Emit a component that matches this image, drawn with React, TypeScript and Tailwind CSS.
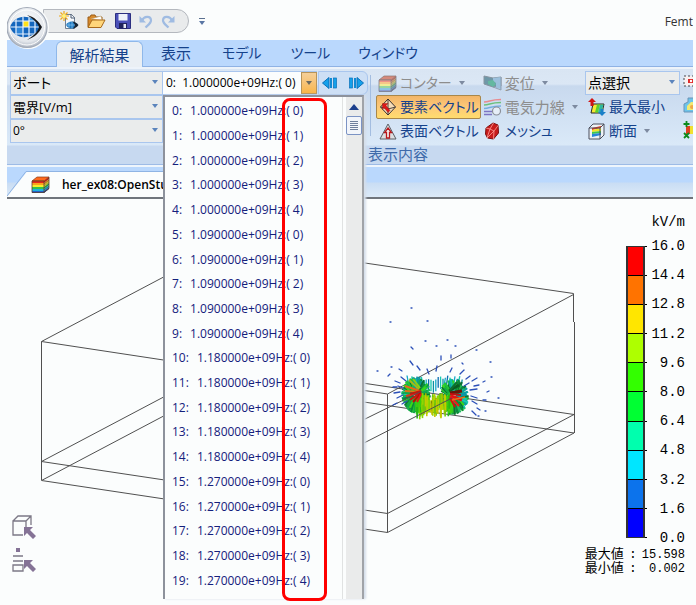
import React from "react";

const JP = "font-['Open_Sans','Noto_Sans_CJK_JP',sans-serif]";

const steps = ["1.000000e+09", "1.090000e+09", "1.180000e+09", "1.270000e+09"];
const results = Array.from({ length: 20 }, (_, i) => ({
  index: i,
  value: `${steps[Math.floor(i / 5)]}Hz:( ${i % 5})`,
}));

const scale = [
  "#ff0000",
  "#ff7300",
  "#ffe600",
  "#aeff00",
  "#33ff00",
  "#00ff33",
  "#00ffae",
  "#00e6ff",
  "#0c73ec",
  "#0000ff",
];
const scaleLabels = ["16.0", "14.4", "12.8", "11.2", "9.6", "8.0", "6.4", "4.8", "3.2", "1.6", "0.0"];

function Caret({ className = "text-[#5b84bc]" }: { className?: string }) {
  return (
    <svg width="6" height="4" viewBox="0 0 6 4" className={className} aria-hidden="true">
      <path d="M0 0h6L3 4z" fill="currentColor" />
    </svg>
  );
}

function Combo({ label, value, size = "text-[14px]" }: { label: string; value: string; size?: string }) {
  return (
    <label className="relative flex h-6 border border-[#a9c6ee] bg-[#eaecec]">
      <span className="sr-only">{label}</span>
      <select
        className={`w-full appearance-none bg-transparent px-[2px] leading-[22px] text-black outline-none [font-feature-settings:'palt'] ${size}`}
      >
        <option>{value}</option>
      </select>
      <span className="pointer-events-none absolute top-2 right-1">
        <Caret />
      </span>
    </label>
  );
}

/* ---------- quick access icons ---------- */

function Orb() {
  return (
    <svg width="42" height="43" viewBox="0 0 42 43" aria-hidden="true">
      <defs>
        <radialGradient id="orb" cx="50%" cy="40%" r="60%">
          <stop offset="0" stopColor="#ffffff" />
          <stop offset="0.75" stopColor="#e3e7ec" />
          <stop offset="1" stopColor="#a9b2bf" />
        </radialGradient>
        <clipPath id="eye">
          <path d="M3 21C7 9 24 6 34 21C24 36 7 33 3 21z" />
        </clipPath>
      </defs>
      <circle cx="20" cy="21.500" r="20" fill="url(#orb)" stroke="#a3abb8" strokeWidth="1.200" />
      <circle cx="20" cy="21.500" r="17.500" fill="none" stroke="#fff" strokeWidth="1" />
      <g clipPath="url(#eye)">
        <rect width="42" height="43" fill="#1466bd" />
        <rect x="16" y="15" width="6" height="6" fill="#ffe21a" />
        <rect x="22" y="9" width="5" height="6" fill="#3f9ae6" />
        <rect x="9" y="21" width="7" height="7" fill="#2f86d8" />
        <path d="M9 5v32M16 5v32M22 5v32M28 5v32M0 15h40M0 21h40M0 28h40" stroke="#e8f2ff" strokeWidth="1.200" />
      </g>
      <path d="M20 9C28 11 32 16 35 21C32 27 28 31 20 34C26 30 31 26 32 21C31 17 26 13 20 9z" fill="#16181c" />
    </svg>
  );
}

function NewIcon() {
  return (
    <svg width="20" height="20" viewBox="0 0 20 20" aria-hidden="true">
      <path d="M6.500 3.500h6l3 3v11h-9z" fill="#f6f8fb" stroke="#6f7f92" />
      <path d="M12 3v4h4" fill="none" stroke="#4a5a70" />
      <path d="M5 0v10M0 5h10M1.500 1.500l7 7M8.500 1.500l-7 7" stroke="#f0a818" strokeWidth="1.200" />
      <circle cx="5" cy="5" r="2" fill="#fff27a" />
      <path d="M7 14c2-4 8-5 12 0c-4 5-10 4-12 0z" fill="#1c78c0" />
      <path d="M13 10.500c3 0 5 2 6.500 3.500c-1.500 2-3.500 3.500-6 3.500c3-1.500 3-5-.5-7z" fill="#1a2430" />
      <path d="M10 11v6M13 10.500v7M7 14h9" stroke="#9fd2f5" strokeWidth=".6" />
    </svg>
  );
}

function OpenIcon() {
  return (
    <svg width="19" height="16" viewBox="0 0 19 16" aria-hidden="true">
      <path d="M1 14V4h2l1-2h4l1 2h6v3" fill="#d88a2c" stroke="#9a5c18" />
      <path d="M4 6L14 3l1 4" fill="#fff" stroke="#b8a070" strokeWidth=".6" />
      <path d="M1 14.500L5 7h13l-4 7.500z" fill="#ffd67a" stroke="#a86a1c" />
    </svg>
  );
}

function SaveIcon() {
  return (
    <svg width="16" height="16" viewBox="0 0 16 16" aria-hidden="true">
      <path d="M.5.5h15v15H2l-1.500-1.500z" fill="#4a50b8" stroke="#2c2f80" />
      <rect x="3.500" y="1" width="9" height="6.500" fill="#eef1fa" />
      <rect x="4" y="10" width="8" height="5.500" fill="#20235e" />
      <rect x="8.500" y="11" width="2.500" height="4" fill="#e6e9f5" />
    </svg>
  );
}

function UndoIcon({ flip = false }: { flip?: boolean }) {
  return (
    <svg width="14" height="15" viewBox="0 0 14 15" className={flip ? "-scale-x-100" : ""} aria-hidden="true">
      <path d="M3 6.500C5 2 11.500 1.500 12 6C12.300 9 9 11 6.500 13.500" fill="none" stroke="#9fbbe2" strokeWidth="2.200" />
      <path d="M.5 2v6.500H7z" fill="#9fbbe2" />
    </svg>
  );
}

/* ---------- ribbon icons ---------- */

function RainbowCube({ faded = false }: { faded?: boolean }) {
  const bands = faded
    ? ["#ee9488", "#f5c689", "#f0ec96", "#98d6a0", "#8cc4e4", "#8a9cd0"]
    : ["#e8281a", "#f8a31c", "#f6ee2a", "#35c24a", "#1fb4dc", "#2560c8"];
  return (
    <svg width="19" height="17" viewBox="0 0 19 17" aria-hidden="true">
      <path d="M1 5L6 1h12l-5 4z" fill={faded ? "#d58a7c" : "#ff6a1c"} stroke={faded ? "#8c7470" : "#8a3a14"} strokeWidth=".7" />
      {bands.map((c, i) => (
        <g key={c} fill={c}>
          <rect x="1" y={5 + i * 2} width="12" height="2" />
          <path d={`M13 ${5 + i * 2}l5-4v2l-5 4z`} style={{ filter: "brightness(.75)" }} />
        </g>
      ))}
      <path d="M1 5h12v11.500H1zM13 16.500l5-4V1" fill="none" stroke={faded ? "#80808a" : "#5a4030"} strokeWidth=".8" />
    </svg>
  );
}

function ElementVectorIcon() {
  return (
    <svg width="18" height="18" viewBox="0 0 18 18" aria-hidden="true">
      <path d="M9 1l7.500 8L9 17 1.500 9z" fill="#f6dcb8" stroke="#3a3230" />
      <path d="M9 1v16M1.500 9L9 11l7.500-2" fill="none" stroke="#3a3230" strokeWidth=".9" />
      <path d="M3.500 5.500h5.500l-2 2 4 5-2 2-4-5-1.500 2z" fill="#e01818" stroke="#8c0c0c" strokeWidth=".4" />
    </svg>
  );
}

function SurfaceVectorIcon() {
  return (
    <svg width="18" height="17" viewBox="0 0 18 17" aria-hidden="true">
      <path d="M9 1l8 15H1z" fill="#dcdfe2" stroke="#5b5f66" />
      <path d="M9 5l3.500 4.500h-2v5.500h-3V9.500h-2z" fill="#f5efee" stroke="#b8181c" strokeWidth="1.300" />
    </svg>
  );
}

function DisplaceIcon() {
  return (
    <svg width="19" height="16" viewBox="0 0 19 16" aria-hidden="true">
      <path d="M1 1l9 2 8-1v9l-8 1-9-3z" fill="#6f98a8" stroke="#8794a0" />
      <path d="M10 3l8-1v12l-5-1V8l-3-2z" fill="#9cc0dc" />
      <path d="M5 6l5-1 3 4-3 3-5-3z" fill="#64b8a0" />
      <path d="M18 2v13l-8-3" fill="none" stroke="#8592a4" strokeWidth=".8" />
    </svg>
  );
}

function FieldLineIcon() {
  return (
    <svg width="19" height="18" viewBox="0 0 19 18" fill="none" aria-hidden="true">
      <path d="M1 4c6 0 6-2.500 17-2.500" stroke="#e88a90" strokeWidth="1.400" />
      <path d="M1 7c6 0 6-2.500 17-2.500" stroke="#6cc07c" strokeWidth="1.400" />
      <path d="M1 10.500c6 0 6-2.500 17-2.500" stroke="#74aee0" strokeWidth="1.400" />
      <path d="M1 13.500h8M1 16.500h8" stroke="#7c74c4" strokeWidth="1.400" />
      <circle cx="13.500" cy="13" r="4" fill="#e6eef8" stroke="#8a8f98" strokeWidth="1.200" />
    </svg>
  );
}

function MeshIcon() {
  return (
    <svg width="16" height="18" viewBox="0 0 16 18" aria-hidden="true">
      <path d="M2 6l7-5 5 2 .5 8-5 6-6-1-2-4z" fill="#c81c1c" stroke="#7c1010" />
      <path d="M9.500 1L6 7l4 2 4.500-6M2 6l4 1-3 9 7-7-.5 8" stroke="#ffa098" strokeWidth=".8" fill="none" />
    </svg>
  );
}

function MinMaxIcon() {
  return (
    <svg width="18" height="18" viewBox="0 0 18 18" aria-hidden="true">
      <path d="M5 6h11l-2 9H3z" fill="#f5e832" stroke="#272727" />
      <path d="M9 6.500h3l-2 8H7z" fill="#58d030" />
      <path d="M12 6.500h3.500l-2 8H10z" fill="#2fb8a0" />
      <path d="M4 0l4 4H5.500v4h-3V4H0z" fill="#d01414" />
      <path d="M14 18l-4-4h2.500v-3h3v3H18z" fill="#1a80c8" />
    </svg>
  );
}

function SectionIcon() {
  return (
    <svg width="17" height="17" viewBox="0 0 17 17" aria-hidden="true">
      <path d="M1 5l4-4h11v11l-4 4H1z" fill="#eef2f6" stroke="#4b4f5c" />
      <path d="M4 5l9-2v2l-9 2z" fill="#e83a20" />
      <path d="M4 7l9-2v3l-9 1z" fill="#f2e428" />
      <path d="M4 9l9-1v2l-9 1z" fill="#3cc850" />
      <path d="M4 11l9-1v2l-9 2z" fill="#2884d8" />
      <path d="M1 5h11v11M12 5l4-4" fill="none" stroke="#4b4f5c" />
    </svg>
  );
}

function StepIcon({ flip = false }: { flip?: boolean }) {
  return (
    <svg width="15" height="12" viewBox="0 0 15 12" className={flip ? "-scale-x-100" : ""} aria-hidden="true">
      <path d="M.5 6L7 .5v11z" fill="#14a0ea" stroke="#0b6fb8" />
      <rect x="8" y="1" width="2" height="10" fill="#0f8ad4" />
      <rect x="11.500" y="1" width="3" height="10" fill="#14a0ea" stroke="#0b6fb8" strokeWidth=".7" />
    </svg>
  );
}

function SelectRegionIcon() {
  return (
    <svg width="16" height="14" viewBox="0 0 16 14" aria-hidden="true">
      <rect x="1" y="1" width="14" height="10" fill="#f8f0f0" stroke="#44464c" strokeDasharray="2 2" />
      <path d="M5 4h7v4H5z" fill="#e02828" />
      <circle cx="8" cy="6" r="1.200" fill="#fff" />
    </svg>
  );
}

function ContourMapIcon() {
  return (
    <svg width="16" height="18" viewBox="0 0 16 18" aria-hidden="true">
      <path d="M1 16V8l4-2V2h11v14z" fill="#6cc4ea" stroke="#6a94b8" />
      <path d="M4 14V10l4-4h6v8z" fill="#f2ea70" />
      <circle cx="9" cy="11" r="2" fill="#f0a848" />
    </svg>
  );
}

function PointsIcon() {
  return (
    <svg width="16" height="18" viewBox="0 0 16 18" aria-hidden="true">
      <rect x="3" y="5" width="12" height="8" fill="#f0e030" />
      <path d="M3 5h4v8H3z" fill="#e04020" />
      <path d="M3.500 0v6M.5 3h6M1 12l5 5M6 12l-5 5" stroke="#0d8a1c" strokeWidth="1.800" />
    </svg>
  );
}

function RibbonButton({
  icon,
  children,
  tone = "text-[#15428b]",
  size = "text-[14px]",
  active = false,
  menu = false,
}: {
  icon: React.ReactNode;
  children: React.ReactNode;
  tone?: string;
  size?: string;
  active?: boolean;
  menu?: boolean;
}) {
  return (
    <button
      type="button"
      aria-pressed={active}
      className={`flex h-6 items-center gap-[3px] rounded-xs border px-px whitespace-nowrap [font-feature-settings:'palt'] ${size} ${tone} ${
        active ? "border-[#a8874a] bg-linear-to-b from-[#f2b568] via-[#fdc978] to-[#ffdc6e]" : "border-transparent"
      }`}
    >
      <span className="flex w-[19px] shrink-0 justify-center">{icon}</span>
      <span className="leading-5">{children}</span>
      {menu && (
        <span className="pl-1">
          <Caret className="text-[#7d8aa0]" />
        </span>
      )}
    </button>
  );
}

function Divider() {
  return <div className="mt-1 mb-7 w-px self-stretch bg-[#a3bde0]" />;
}

/* ---------- field plot ---------- */

function noise(n: number) {
  const v = Math.sin(n * 127.1 + 11.7) * 43758.5453;
  return v - Math.floor(v);
}

type Stroke = { x1: number; y1: number; x2: number; y2: number; c: string; w: number };

function lobe(cx: number, cy: number, side: number, seed: number): Stroke[] {
  const out: Stroke[] = [];
  for (let i = 0; i < 190; i++) {
    const a = noise(seed + i) * Math.PI * 2;
    const ux = Math.cos(a);
    const uy = Math.sin(a);
    const inner = 2 + noise(seed + i + 300) * 6;
    const outer = 11 + noise(seed + i + 600) * 4;
    const greens = ["#0a8a3c", "#12a84a", "#22c832", "#0c7034", "#1cb860", "#3ad818"];
    const teals = ["#10c0a0", "#0a98a8", "#18c8b8"];
    const outerSide = ux * side > 0.75;
    const set = outerSide || uy < -0.9 ? [...greens, ...teals] : greens;
    out.push({
      x1: cx + ux * inner,
      y1: cy + uy * inner,
      x2: cx + ux * outer,
      y2: cy + uy * outer * 1.25,
      c: set[Math.floor(noise(seed + i + 900) * set.length)],
      w: 2,
    });
  }
  return out;
}

const bodyStrokes: Stroke[] = [];
for (let i = 0; i < 110; i++) {
  const x = 416 + noise(i + 40) * 36;
  const y = 393 + noise(i + 90) * 11;
  const edge = x < 422 || x > 446;
  const cols = edge
    ? ["#6cd808", "#3cd010", "#8ed800", "#28b818"]
    : ["#b4d400", "#c8c800", "#8ed800", "#a0b400", "#6cc80c", "#848c00"];
  bodyStrokes.push({ x1: x, y1: y, x2: x, y2: y + 9 + noise(i + 140) * 7, c: cols[i % cols.length], w: 1.6 });
}
const topStrokes: Stroke[] = [];
for (let i = 0; i < 24; i++) {
  const x = 407 + i * 2.4;
  const y = 375 + noise(i + 3) * 6;
  topStrokes.push({
    x1: x,
    y1: y,
    x2: x + (i < 8 ? 2 : i > 15 ? -2 : 0),
    y2: y + 9 + noise(i + 60) * 6,
    c: ["#12a8c8", "#0c6cb0", "#18c8b0", "#0a90a0"][i % 4],
    w: 1.3,
  });
}
const warm: Stroke[] = [
  { x1: 420, y1: 391, x2: 405, y2: 386, c: "#e86818", w: 2 },
  { x1: 420, y1: 392, x2: 405, y2: 391, c: "#d87818", w: 2 },
  { x1: 419, y1: 389, x2: 409, y2: 380, c: "#a8b818", w: 2 },
  { x1: 420, y1: 388, x2: 413, y2: 379, c: "#90d010", w: 2 },
  { x1: 420, y1: 393, x2: 406, y2: 396, c: "#d83818", w: 2 },
  { x1: 421, y1: 391, x2: 410, y2: 394, c: "#c01810", w: 2 },
  { x1: 421, y1: 392, x2: 410, y2: 400, c: "#d01010", w: 2 },
  { x1: 421, y1: 393, x2: 413, y2: 402, c: "#c00808", w: 2 },
  { x1: 421, y1: 394, x2: 417, y2: 402, c: "#e01818", w: 2 },
  { x1: 449, y1: 391, x2: 459, y2: 385, c: "#0a5c20", w: 3 },
  { x1: 450, y1: 390, x2: 457, y2: 382, c: "#0c7030", w: 2 },
  { x1: 450, y1: 393, x2: 462, y2: 391, c: "#6c1408", w: 3 },
  { x1: 450, y1: 394, x2: 461, y2: 395, c: "#c01010", w: 2 },
  { x1: 451, y1: 396, x2: 462, y2: 400, c: "#e01414", w: 3 },
  { x1: 450, y1: 396, x2: 459, y2: 406, c: "#f01818", w: 2 },
  { x1: 450, y1: 398, x2: 455, y2: 407, c: "#d80c0c", w: 2 },
  { x1: 452, y1: 400, x2: 465, y2: 397, c: "#e07818", w: 1.5 },
];
const specks = [
  [411, 308, 1, 0], [390, 322, 1, 0], [427, 321, 1, 0], [425, 341, 1, 0], [447, 340, 1, 0], [436, 346, 1, 0],
  [455, 346, 1, 0], [411, 347, 2, 2], [476, 350, 1, 0], [462, 363, 1, 1], [391, 367, 1, 0], [377, 371, 1, 0],
  [490, 362, 1, 0], [491, 377, 1, 0], [410, 361, 3, 4], [417, 366, 3, 4], [441, 356, 0, 4], [451, 355, 0, 3],
  [437, 366, -1, 5], [452, 368, -2, 4], [464, 370, -4, 4], [427, 369, 2, 5], [399, 369, 3, 2], [388, 376, 2, -2],
  [395, 381, 5, 2], [470, 376, -4, 3], [477, 378, -5, 3], [469, 383, -5, 3], [474, 386, 5, -1], [398, 386, 5, 2],
  [393, 387, 4, 0], [483, 382, 2, -1], [487, 392, 2, -1], [498, 398, 1, 0], [394, 393, 6, -1], [397, 398, 6, -3],
  [393, 405, 4, -2], [471, 396, 6, 2], [472, 401, 5, 3], [477, 408, 3, 2], [483, 400, 3, 0], [478, 416, 1, 0],
  [472, 411, 4, 4], [485, 411, 1, 0], [401, 377, 5, 4], [470, 390, 7, -1], [402, 404, 5, -3],
];

function FieldPlot() {
  const strokes = [...topStrokes, ...lobe(416, 395, -1, 7), ...lobe(454, 397, 1, 51), ...bodyStrokes, ...warm];
  return (
    <svg
      viewBox="7 199 686 400"
      preserveAspectRatio="xMinYMin meet"
      className="absolute inset-0 h-full w-full"
      role="img"
      aria-label="電界ベクトル"
    >
      <g fill="none" stroke="#505050" strokeWidth="1">
        <path d="M41.500 480V341.500L228 243L573.500 293.500V322M574.500 322V433M41.500 341.500L387.500 394L573.500 294.500" />
        <path d="M387.500 394V532.500M41.500 461.500L387.500 513.500L574 414.500M41.500 480.500L387.500 532.500L574 433" />
        <path d="M41.500 461.500L228 363L574 414.500M41.500 480.500L228 382L574 433M228 243V382" />
      </g>
      {strokes.map((s, i) => (
        <line key={i} x1={s.x1} y1={s.y1} x2={s.x2} y2={s.y2} stroke={s.c} strokeWidth={s.w} />
      ))}
      <g fill="none" stroke="#505050" strokeWidth="1">
        <path d="M363 420L422 391M363 443.500L452 398" />
      </g>
      <g stroke="#2c50b8" strokeWidth="1.300" strokeLinecap="round">
        {specks.map(([x, y, dx, dy], i) => (
          <line key={i} x1={x} y1={y} x2={x + dx} y2={y + dy} />
        ))}
      </g>
    </svg>
  );
}

function Legend() {
  return (
    <div className="relative flex flex-col items-end pr-2 text-black">
      <div className="font-['Liberation_Mono',monospace] text-[14px] leading-4">kV/m</div>
      <div className="flex gap-1">
        <div className="mt-4 flex h-[292px]">
          <div className="flex w-[19px] flex-col divide-y divide-black border-x-2 border-y border-[#333]">
            {scale.map((c) => (
              <div key={c} className="flex-1" style={{ backgroundColor: c }} />
            ))}
          </div>
          <div className="flex w-[2px] flex-col justify-between">
            {scaleLabels.map((l) => (
              <div key={l} className="h-px bg-black" />
            ))}
          </div>
        </div>
        <div className="mt-2 flex h-[308px] flex-col justify-between text-right font-['Liberation_Mono',monospace] text-[14px] leading-4">
          {scaleLabels.map((l) => (
            <div key={l}>{l}</div>
          ))}
        </div>
      </div>
      <table className="mt-[2px] font-['Liberation_Mono','Noto_Sans_CJK_JP',monospace] text-[13px] leading-[14px]">
        <tbody>
          {[
            ["最大値", "15.598"],
            ["最小値", "0.002"],
          ].map(([k, v]) => (
            <tr key={k}>
              <th className="p-0 text-left font-normal">{k}</th>
              <td className="w-[18px] p-0 text-center">:</td>
              <td className="p-0 text-right text-[12px]">{v}</td>
            </tr>
          ))}
        </tbody>
      </table>
    </div>
  );
}

function PickArrow() {
  return <path d="M13 12h9l-3 3 6 6-3 3-6-6-3 3z" fill="#857396" />;
}

function ResultMenu() {
  return (
    <div className="absolute top-[95px] bottom-0 left-[156px] flex w-[201px] border-t-2 border-r-2 border-l-2 border-[#8d929c] border-r-[#a0a3a8] bg-[#fbfdfd] shadow-[2px_0_2px_#d5deea]">
      <ul role="listbox" aria-label="結果一覧" className="flex flex-1 flex-col border-r border-[#e0e2e2] pt-[2px] pb-[6px]">
        {results.map((r) => (
          <li
            key={r.index}
            role="option"
            aria-selected={r.index === 0}
            className="flex flex-1 items-center gap-2 pl-[7px] text-[12px] leading-4 whitespace-nowrap text-[#14207c]"
          >
            <span>{r.index}:</span>
            <span>{r.value}</span>
          </li>
        ))}
      </ul>
      <div className="ml-[3px] flex w-4 flex-col items-center bg-[#eaebeb]">
        <button type="button" aria-label="上へ" className="flex h-[19px] w-full items-center justify-center">
          <svg width="10" height="6" viewBox="0 0 10 6">
            <path d="M5 0l5 6H0z" fill="#1c3f8c" />
          </svg>
        </button>
        <div className="flex h-[19px] w-full flex-col items-center justify-center gap-px rounded-xs border border-[#7b93c4] bg-[#f2f5fa]">
          <i className="h-px w-2 bg-[#6f7f9c]" />
          <i className="h-px w-2 bg-[#6f7f9c]" />
          <i className="h-px w-2 bg-[#6f7f9c]" />
          <i className="h-px w-2 bg-[#6f7f9c]" />
          <i className="h-px w-2 bg-[#6f7f9c]" />
        </div>
      </div>
      <div className="pointer-events-none absolute top-[1px] -bottom-[2px] left-[117px] w-[45px] rounded-lg border-3 border-[#ff0000]" />
    </div>
  );
}

export default function App() {
  return (
    <div className={`min-h-screen bg-[#fbfdfd] pr-[3px] pb-[6px] pl-[7px] ${JP}`}>
      <div className="relative flex min-h-[calc(100vh-6px)] flex-col">
        <header className="flex h-10 items-center justify-between overflow-hidden">
          <div className="mt-[2px] ml-9 flex items-center gap-[10px]">
            <div className="flex h-6 w-[146px] items-center justify-between rounded-r-full border border-[#b4b8be] bg-[#e9ebec] pr-[13px] pl-[15px]">
              <button type="button" aria-label="新規"><NewIcon /></button>
              <button type="button" aria-label="開く"><OpenIcon /></button>
              <button type="button" aria-label="保存"><SaveIcon /></button>
              <button type="button" aria-label="元に戻す"><UndoIcon /></button>
              <button type="button" aria-label="やり直し"><UndoIcon flip /></button>
            </div>
            <button type="button" aria-label="カスタマイズ" className="flex flex-col gap-[2px]">
              <i className="h-px w-[6px] bg-[#5a7090]" />
              <Caret className="text-[#5a76a4]" />
            </button>
          </div>
          <h1 className="mt-1 text-[12px] text-[#333]">Femt</h1>
        </header>
        <button type="button" aria-label="メニュー" className="absolute top-[6px] left-0 rounded-full bg-[#fbfdfd]">
          <Orb />
        </button>

        <nav className="flex h-[27px] items-end border-b border-[#8fb2e4] bg-[#bad8fd] pl-[49px] text-[#15428b] [font-feature-settings:'palt']">
          <button
            type="button"
            className="-mb-px h-[26px] w-[87px] rounded-t-md border border-b-0 border-[#8fb8ea] bg-[#eaeff4] text-[15px] leading-[22px]"
          >
            解析結果
          </button>
          <button type="button" className="ml-[18px] h-[26px] text-[15px] leading-6">表示</button>
          <button type="button" className="ml-[31px] h-[26px] text-[14px] leading-6">モデル</button>
          <button type="button" className="ml-[29px] h-[26px] text-[14px] leading-6">ツール</button>
          <button type="button" className="ml-[28px] h-[26px] text-[14px] leading-6">ウィンドウ</button>
        </nav>

        <section className="flex h-[98px] overflow-hidden border-t-2 border-b border-[#edf3fa] border-b-[#9dbbe6] bg-[linear-gradient(#d9e5f3_0px,#dbe7f5_15px,#c8d9ee_17px,#dae9f8_76px,#c7d9f0_77px,#c7d9f0_100%)] pt-[2px] pl-[3px]">
          <div className="flex items-start">
            <div className="grid w-[153px] shrink-0">
              <Combo label="表示対象" value="ボート" />
              <Combo label="物理量" value="電界[V/m]" size="text-[13px]" />
              <Combo label="位相" value="0°" size="text-[12px]" />
            </div>
            <label className="relative flex h-6 w-[154px] shrink-0 border-y border-[#a9c6ee] bg-[#fbfdfd]">
              <span className="sr-only">結果</span>
              <select className="w-full appearance-none bg-transparent pl-[3px] text-[12px] text-black outline-none">
                <option>{"0:\u00a0\u00a01.000000e+09Hz:( 0)"}</option>
              </select>
              <span className="pointer-events-none absolute top-0 right-0 flex h-full w-4 items-center justify-center border border-[#b89458] bg-linear-to-b from-[#f5cf98] to-[#f9b648]">
                <Caret className="text-[#6b6a60]" />
              </span>
            </label>
            <div className="ml-px flex h-6 w-[50px] shrink-0 items-center justify-between rounded-r-md border border-[#a9c6ee] bg-[#cddff5] px-[3px]">
              <button type="button" aria-label="前へ"><StepIcon /></button>
              <button type="button" aria-label="次へ"><StepIcon flip /></button>
            </div>
          </div>
          <div className="ml-[2px] flex"><Divider /></div>
          <div className="ml-[5px] w-[203px] shrink-0">
            <div className="flex">
              <div className="w-[105px]">
                <RibbonButton icon={<RainbowCube faded />} tone="text-[#8d8d8d]" menu>コンター</RibbonButton>
                <RibbonButton icon={<ElementVectorIcon />} active>要素ベクトル</RibbonButton>
                <RibbonButton icon={<SurfaceVectorIcon />}>表面ベクトル</RibbonButton>
              </div>
              <div>
                <RibbonButton icon={<DisplaceIcon />} tone="text-[#8d8d8d]" size="text-[15px]" menu>変位</RibbonButton>
                <RibbonButton icon={<FieldLineIcon />} tone="text-[#8d8d8d]" size="text-[15px]" menu>電気力線</RibbonButton>
                <RibbonButton icon={<MeshIcon />}>メッシュ</RibbonButton>
              </div>
            </div>
            <div className="-ml-2 pt-px text-[15px] leading-5 text-[#3e6aaa]">表示内容</div>
          </div>
          <Divider />
          <div className="ml-[6px] w-[95px] shrink-0">
            <Combo label="選択モード" value="点選択" />
            <RibbonButton icon={<MinMaxIcon />}>最大最小</RibbonButton>
            <RibbonButton icon={<SectionIcon />} menu>断面</RibbonButton>
          </div>
          <div className="ml-[3px] flex h-[72px] shrink-0 flex-col justify-around">
            <button type="button" aria-label="範囲選択"><SelectRegionIcon /></button>
            <button type="button" aria-label="分布"><ContourMapIcon /></button>
            <button type="button" aria-label="点追加"><PointsIcon /></button>
          </div>
        </section>

        <div className="flex h-[34px] items-end border-t-2 border-b-2 border-[#eef5fc] border-b-[#70757c] bg-[linear-gradient(#bad8fd_0px,#bad8fd_15px,#c9ddf4_16px,#dceaf8_100%)]">
          <svg width="22" height="26" viewBox="0 0 22 26" aria-hidden="true">
            <path d="M0 26L20 .5h2V26z" fill="#fbfdfd" />
            <path d="M0 25L19 .5h3" fill="none" stroke="#8fb4e4" />
          </svg>
          <button
            type="button"
            className="flex h-[26px] items-center gap-3 border-t border-[#8fb4e4] bg-[#fbfdfd] pr-4 pl-[2px] text-[12px] font-semibold text-black"
          >
            <RainbowCube />
            her_ex08:OpenStu
          </button>
        </div>

        <main className="relative flex flex-1 items-end justify-between">
          <FieldPlot />
          <div className="relative mb-[26px] ml-1 flex flex-col gap-2">
            <button type="button" aria-label="立体選択">
              <svg width="27" height="25" viewBox="0 0 27 25">
                <path d="M12 20H2V6h13v6M2 6l5-5h13v9M15 6l5-5" fill="none" stroke="#7c7886" strokeWidth="1.300" />
                <PickArrow />
              </svg>
            </button>
            <button type="button" aria-label="要素選択">
              <svg width="27" height="25" viewBox="0 0 27 25">
                <path d="M5 0h4v4H5z" fill="#857396" />
                <path d="M2 8h10M2 13h10M2 17h10v6H2z" fill="none" stroke="#7c7886" strokeWidth="1.300" />
                <PickArrow />
              </svg>
            </button>
          </div>
          <div className="mb-[23px]">
            <Legend />
          </div>
        </main>

        <ResultMenu />
      </div>
    </div>
  );
}
